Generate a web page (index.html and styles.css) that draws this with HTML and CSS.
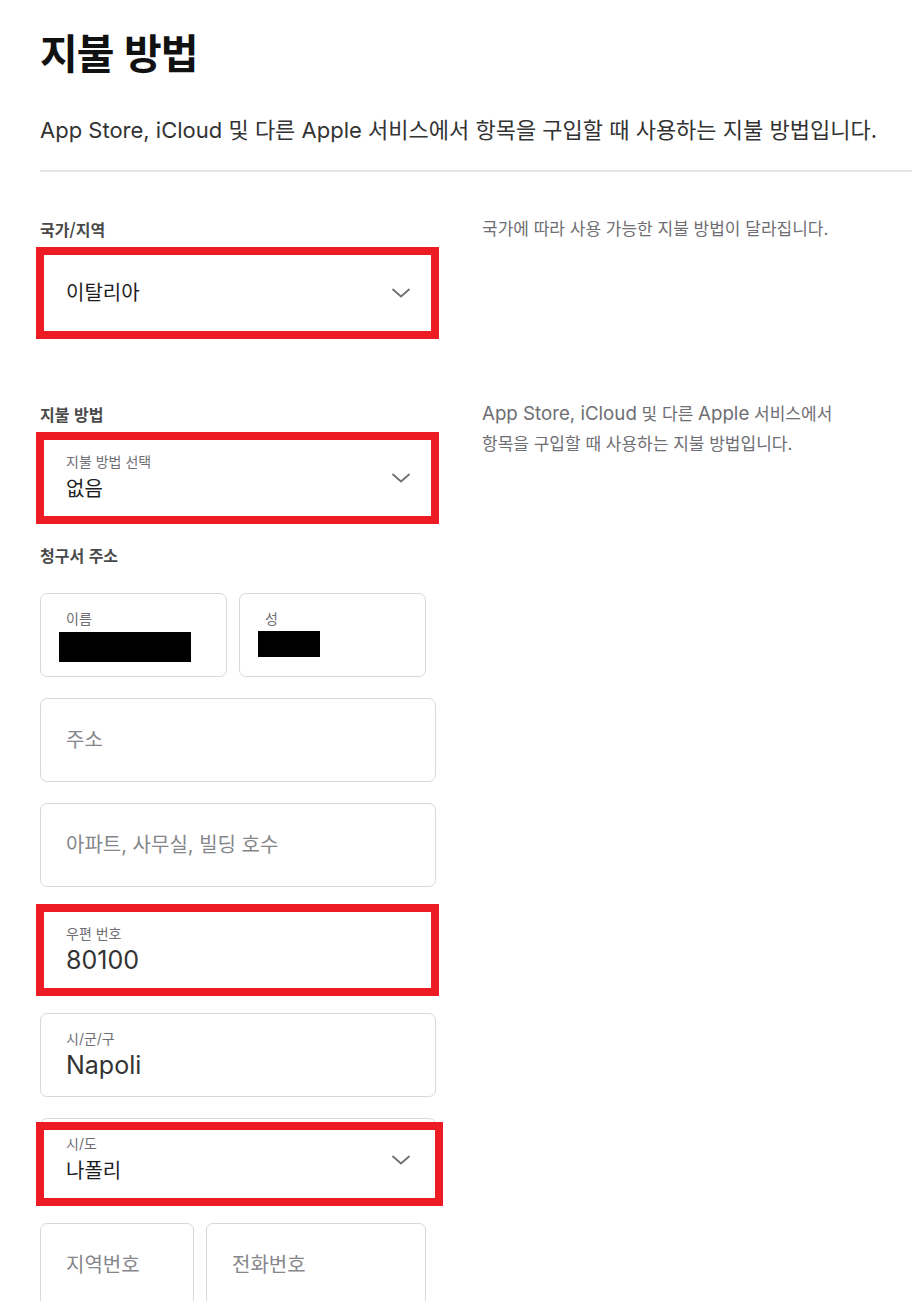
FILE: index.html
```html
<!DOCTYPE html>
<html lang="ko">
<head>
<meta charset="utf-8">
<title>지불 방법</title>
<link rel="stylesheet" href="styles.css">
</head>
<body>
<main class="page">
  <h1 class="title">지불 방법</h1>
  <p class="subtitle">App Store, iCloud 및 다른 Apple 서비스에서 항목을 구입할 때 사용하는 지불 방법입니다.</p>
  <hr class="divider">

  <section class="row row-country">
    <div class="col-left">
      <div class="group-label">국가/지역</div>
      <div class="field field-select hl">
        <span class="value">이탈리아</span>
        <svg class="chevron" viewBox="0 0 18 10" width="18" height="10"><path d="M1 1.5 L9 8.5 L17 1.5"/></svg>
      </div>
    </div>
    <p class="note">국가에 따라 사용 가능한 지불 방법이 달라집니다.</p>
  </section>

  <section class="row row-payment">
    <div class="col-left">
      <div class="group-label">지불 방법</div>
      <div class="field field-select field-labeled hl">
        <div class="stack">
          <span class="float-label">지불 방법 선택</span>
          <span class="value">없음</span>
        </div>
        <svg class="chevron" viewBox="0 0 18 10" width="18" height="10"><path d="M1 1.5 L9 8.5 L17 1.5"/></svg>
      </div>

      <div class="group-label billing-label">청구서 주소</div>
      <div class="fields">
        <div class="pair">
          <div class="field field-labeled field-name">
            <div class="stack">
              <span class="float-label">이름</span>
              <span class="redact redact-first"></span>
            </div>
          </div>
          <div class="field field-labeled field-name">
            <div class="stack">
              <span class="float-label">성</span>
              <span class="redact redact-last"></span>
            </div>
          </div>
        </div>
        <div class="field"><span class="placeholder">주소</span></div>
        <div class="field"><span class="placeholder">아파트, 사무실, 빌딩 호수</span></div>
        <div class="field field-labeled hl">
          <div class="stack">
            <span class="float-label">우편 번호</span>
            <span class="value value-latin">80100</span>
          </div>
        </div>
        <div class="field field-labeled">
          <div class="stack">
            <span class="float-label">시/군/구</span>
            <span class="value value-latin">Napoli</span>
          </div>
        </div>
        <div class="field field-select field-labeled hl hl-shift">
          <div class="stack">
            <span class="float-label">시/도</span>
            <span class="value">나폴리</span>
          </div>
          <svg class="chevron" viewBox="0 0 18 10" width="18" height="10"><path d="M1 1.5 L9 8.5 L17 1.5"/></svg>
        </div>
        <div class="pair pair-phone">
          <div class="field"><span class="placeholder">지역번호</span></div>
          <div class="field"><span class="placeholder">전화번호</span></div>
        </div>
      </div>
    </div>
    <p class="note"><span class="en">App Store, iCloud</span> 및 다른 <span class="en">Apple</span> 서비스에서<br>항목을 구입할 때 사용하는 지불 방법입니다.</p>
  </section>
</main>
</body>
</html>
```

FILE: styles.css
```css
html, body {
  margin: 0;
  padding: 0;
  background: #ffffff;
}

body {
  font-family: "Inter", "Noto Sans CJK KR", sans-serif;
  color: #1d1d1f;
}

.page {
  padding-left: 40px;
}

.title {
  margin: 27px 0 0;
  font-family: "Noto Sans CJK KR", sans-serif;
  font-weight: 700;
  font-size: 41px;
  line-height: 48px;
  letter-spacing: -1px;
  color: #111111;
}

.subtitle {
  margin: 40px 0 0;
  font-size: 22px;
  line-height: 30px;
  color: #333333;
}

.divider {
  margin: 25px 0 0;
  border: 0;
  border-top: 2px solid #e6e6e6;
  height: 0;
}

.row {
  display: grid;
  grid-template-columns: 396px 1fr;
  column-gap: 46px;
  align-items: start;
}

.row-country {
  padding-top: 47px;
}

.row-payment {
  padding-top: 69px;
}

.group-label {
  font-family: "Noto Sans CJK KR", sans-serif;
  font-weight: 700;
  font-size: 16px;
  line-height: 20px;
  color: #4a4a4a;
  margin-bottom: 12px;
}

.billing-label {
  margin-top: 25px;
  margin-bottom: 28px;
}

.note {
  margin: -5px 0 0;
  font-size: 17px;
  line-height: 30px;
  color: #6e6e73;
}

.note .en {
  font-size: 1.1em;
}

.fields {
  display: flex;
  flex-direction: column;
  gap: 21px;
}

.pair {
  display: grid;
  grid-template-columns: 187px 187px;
  column-gap: 12px;
  width: 386px;
}

.pair-phone {
  grid-template-columns: 154px 220px;
}

.field {
  position: relative;
  box-sizing: border-box;
  height: 84px;
  border: 1px solid #d9d9d9;
  border-radius: 7px;
  background: #ffffff;
  padding: 0 25px;
  display: flex;
  align-items: center;
}

.field-labeled {
  align-items: flex-start;
  padding-top: 15px;
}

.field-select {
  justify-content: space-between;
}

.field-select.field-labeled .chevron {
  align-self: center;
  margin-top: -15px;
}

.stack {
  display: flex;
  flex-direction: column;
}

.float-label {
  font-size: 14px;
  line-height: 19px;
  color: #6e6e73;
}

.value {
  margin-top: 5px;
  font-size: 20px;
  line-height: 27px;
  color: #1d1d1f;
}

.field-select:not(.field-labeled) .value {
  margin-top: 0;
}

.value-latin {
  font-size: 25px;
  margin-top: 4px;
  color: #333333;
}

.placeholder {
  font-size: 20px;
  line-height: 27px;
  color: #86868b;
}

.chevron {
  flex: none;
}

.chevron path {
  fill: none;
  stroke: #707070;
  stroke-width: 1.8;
  stroke-linecap: round;
  stroke-linejoin: round;
}

.field-name {
  padding-left: 25px;
  padding-right: 10px;
}

.redact {
  display: block;
  background: #000000;
  margin-left: -7px;
}

.redact-first {
  margin-top: 4px;
  width: 132px;
  height: 30px;
}

.redact-last {
  margin-top: 3px;
  width: 62px;
  height: 26px;
}

.hl::after {
  content: "";
  position: absolute;
  top: -5px;
  left: -5px;
  right: -4px;
  bottom: -5px;
  border: 8px solid #ed1c24;
  pointer-events: none;
}

.hl-shift::after {
  top: 3px;
  left: -5px;
  right: -8px;
  bottom: -5px;
}
```
